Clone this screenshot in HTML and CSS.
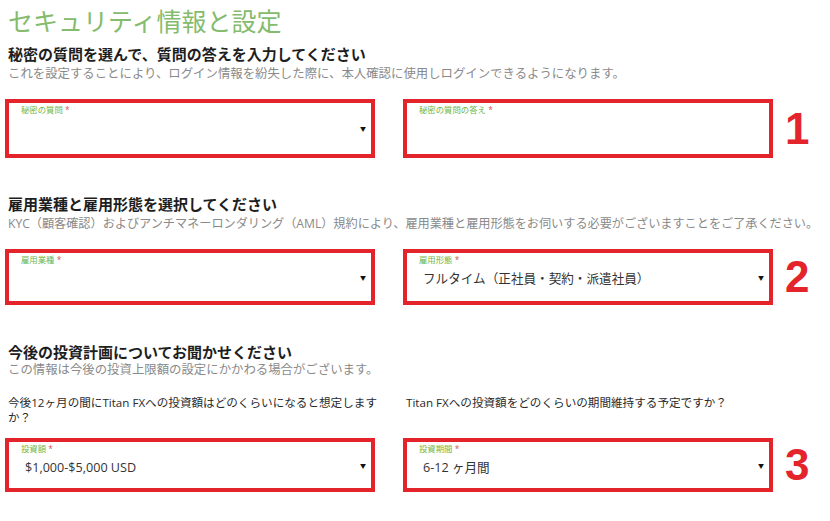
FILE: index.html
```html
<!DOCTYPE html>
<html lang="ja">

<head>
    <meta charset="UTF-8">
    <meta name="viewport" content="width=device-width, initial-scale=1.0">
    <title>セキュリティ情報と設定</title>
    <link rel="stylesheet" href="styles.css">
</head>

<body>
    <div class="page">
        <h1 class="title">セキュリティ情報と設定</h1>

        <section class="block">
            <h2 class="block-head">秘密の質問を選んで、質問の答えを入力してください</h2>
            <p class="block-note">これを設定することにより、ログイン情報を紛失した際に、本人確認に使用しログインできるようになります。</p>
            <div class="row row-1">
                <div class="field">
                    <div class="field-body">
                        <span class="field-label">秘密の質問 <em>*</em></span>
                        <span class="field-value"></span>
                    </div>
                    <span class="caret">▼</span>
                </div>
                <div class="field">
                    <div class="field-body">
                        <span class="field-label">秘密の質問の答え <em>*</em></span>
                        <span class="field-value"></span>
                    </div>
                </div>
                <span class="num">1</span>
            </div>
        </section>

        <section class="block">
            <h2 class="block-head">雇用業種と雇用形態を選択してください</h2>
            <p class="block-note block-note-long">KYC（顧客確認）およびアンチマネーロンダリング（AML）規約により、雇用業種と雇用形態をお伺いする必要がございますことをご了承ください。</p>
            <div class="row row-2">
                <div class="field">
                    <div class="field-body">
                        <span class="field-label">雇用業種 <em>*</em></span>
                        <span class="field-value"></span>
                    </div>
                    <span class="caret">▼</span>
                </div>
                <div class="field">
                    <div class="field-body">
                        <span class="field-label">雇用形態 <em>*</em></span>
                        <span class="field-value">フルタイム（正社員・契約・派遣社員）</span>
                    </div>
                    <span class="caret">▼</span>
                </div>
                <span class="num">2</span>
            </div>
        </section>

        <section class="block block-last">
            <h2 class="block-head">今後の投資計画についてお聞かせください</h2>
            <p class="block-note">この情報は今後の投資上限額の設定にかかわる場合がございます。</p>
            <div class="questions">
                <p class="question">今後12ヶ月の間にTitan FXへの投資額はどのくらいになると想定しますか？</p>
                <p class="question">Titan FXへの投資額をどのくらいの期間維持する予定ですか？</p>
            </div>
            <div class="row row-3">
                <div class="field">
                    <div class="field-body">
                        <span class="field-label">投資額 <em>*</em></span>
                        <span class="field-value">$1,000-$5,000 USD</span>
                    </div>
                    <span class="caret">▼</span>
                </div>
                <div class="field">
                    <div class="field-body">
                        <span class="field-label">投資期間 <em>*</em></span>
                        <span class="field-value">6-12 ヶ月間</span>
                    </div>
                    <span class="caret">▼</span>
                </div>
                <span class="num">3</span>
            </div>
        </section>
    </div>
</body>

</html>
```

FILE: styles.css
```css
* {
    margin: 0;
    padding: 0;
    box-sizing: border-box;
}

body {
    background: #fff;
    color: #333;
    font-family: "Open Sans", "Noto Sans CJK JP", sans-serif;
}

.page {
    width: 830px;
    padding: 6px 0 0 8px;
}

.title {
    font-size: 25px;
    line-height: 30px;
    font-weight: 400;
    color: #84bb6c;
}

.block {
    margin-top: 36px;
}

.title + .block {
    margin-top: 8px;
}

.block-head {
    font-size: 15px;
    line-height: 20px;
    font-weight: 700;
    color: #1e1e1e;
}

.block-note {
    margin-top: 1px;
    font-size: 12.4px;
    line-height: 18px;
    color: #8a8a8a;
    white-space: nowrap;
}

.block-note-long {
    font-size: 12.2px;
    letter-spacing: -0.05px;
}

.block-last {
    margin-top: 38px;
}

.block-last .block-head {
    line-height: 18px;
}

.block-last .block-note {
    margin-top: 0;
}

/* two fields + the red number */
.row {
    display: grid;
    grid-template-columns: 370px 370px auto;
    column-gap: 28px;
    align-items: center;
    margin: 16px 0 0 -3px;
}

.questions {
    display: grid;
    grid-template-columns: 390px 350px;
    column-gap: 8px;
    margin: 16px 0 0 -3px;
}

.question {
    padding-left: 3px;
    font-size: 11.6px;
    line-height: 15px;
    color: #2a2a2a;
}

.questions + .row {
    margin-top: 13px;
}

.field {
    display: flex;
    align-items: center;
    height: 56px;
    border: 4px solid #e3242b;
    background: #fff;
}

.row-1 .field {
    height: 59px;
}

.row-3 .field {
    height: 54px;
}

.field-body {
    flex: 1;
    align-self: flex-start;
    display: flex;
    flex-direction: column;
    padding: 2px 0 0 12px;
}

.field-label {
    font-size: 8.4px;
    line-height: 10px;
    color: #6fb646;
}

.field-label em {
    font-style: normal;
    color: #d2555a;
}

.field-value {
    margin-top: 4px;
    padding-left: 4px;
    height: 20px;
    font-size: 12.6px;
    line-height: 20px;
    color: #333;
}

.caret {
    margin-right: 5px;
    font-size: 6px;
    color: #111;
}

.num {
    margin-left: -16px;
    font-family: "Liberation Sans", Arial, sans-serif;
    font-size: 44px;
    font-weight: 700;
    line-height: 44px;
    color: #e3242b;
}
```
